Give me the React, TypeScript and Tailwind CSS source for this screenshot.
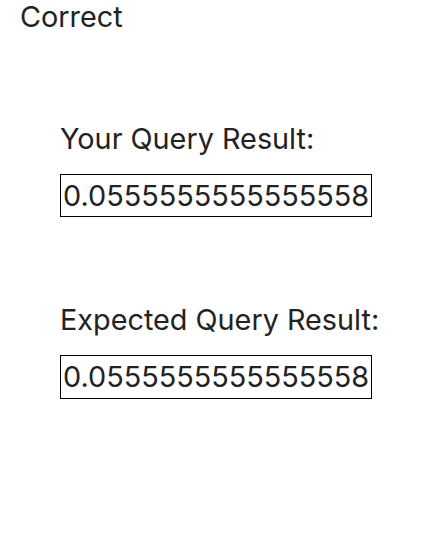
export default function App() {
  const value = "0.0555555555555558";
  return (
    <div className="min-h-screen bg-white text-[#222] font-['Inter',sans-serif] text-[28.8px] leading-none">
      <div className="px-5 pt-[3px]">Correct</div>
      <div className="pl-[60px] pt-[93px]">
        <div className="mb-5">Your Query Result:</div>
        <table className="border border-black">
          <tbody>
            <tr>
              <td className="px-[2px] pt-[7px] pb-[6px]">{value}</td>
            </tr>
          </tbody>
        </table>
        <div className="mt-[89px] mb-5">Expected Query Result:</div>
        <table className="border border-black">
          <tbody>
            <tr>
              <td className="px-[2px] pt-[7px] pb-[6px]">{value}</td>
            </tr>
          </tbody>
        </table>
      </div>
    </div>
  );
}
